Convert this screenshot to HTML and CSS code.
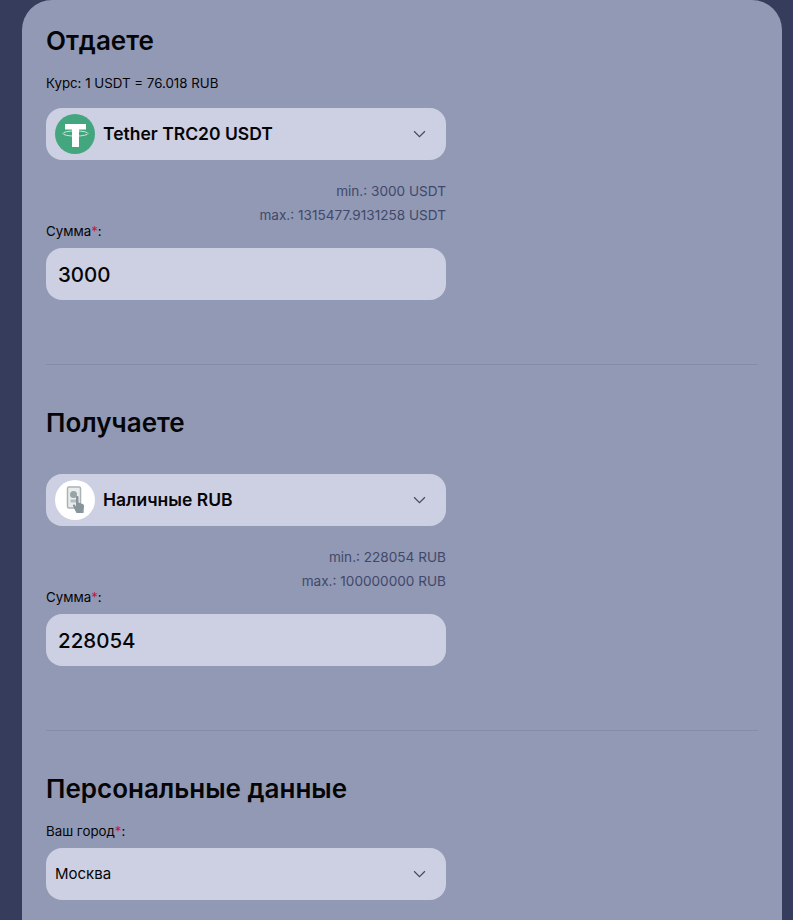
FILE: index.html
```html
<!DOCTYPE html>
<html lang="ru">
<head>
  <meta charset="UTF-8" />
  <meta name="viewport" content="width=device-width, initial-scale=1.0"/>
  <title>Обмен</title>
  <link rel="stylesheet" href="styles.css">
</head>
<body>
  <div class="exchange-card">
    <section class="form-section">
      <h2 class="section-title">Отдаете</h2>
      <p class="rate">Курс: 1 USDT = 76.018 RUB</p>
      <div class="select-box">
        <svg class="coin-icon" viewBox="0 0 40 40">
          <circle cx="20" cy="20" r="20" fill="#43a67f"/>
          <path d="M10 10h21v5.500h-7V33h-7V15.500h-7z" fill="#fff"/>
          <ellipse cx="20.500" cy="19.500" rx="12.500" ry="2.600" fill="none" stroke="#fff" stroke-opacity=".7" stroke-width="1"/>
        </svg>
        <span class="select-text">Tether TRC20 USDT</span>
        <svg class="chevron" viewBox="0 0 12 7"><path d="M1 1l5 5 5-5" fill="none" stroke="#45495f" stroke-width="1.100"/></svg>
      </div>
      <div class="limits">
        <span>min.: 3000 USDT</span>
        <span>max.: 1315477.9131258 USDT</span>
      </div>
      <label class="field-label">Сумма<span class="required">*</span>:</label>
      <div class="amount-box">3000</div>
    </section>

    <section class="form-section">
      <h2 class="section-title title-no-rate">Получаете</h2>
      <div class="select-box">
        <svg class="coin-icon" viewBox="0 0 40 40">
          <circle cx="20" cy="20" r="20" fill="#fff"/>
          <rect x="12.500" y="7" width="13" height="21" rx="1.500" fill="#e9ecec" stroke="#aab3b4" stroke-width="1.500"/>
          <circle cx="18.500" cy="14.500" r="3.500" fill="#98a4a6"/>
          <rect x="15.500" y="19.500" width="6" height="3" fill="#b5bebf"/>
          <path d="M21 17c0-1.500 2.500-1.500 2.500 0v5.500l4 1.500c1 .4 1.500 1 1.500 2l-.5 7h-7l-3.500-7c-.5-1.200 1-2 2-1l1 1.500z" fill="#87949a"/>
        </svg>
        <span class="select-text">Наличные RUB</span>
        <svg class="chevron" viewBox="0 0 12 7"><path d="M1 1l5 5 5-5" fill="none" stroke="#45495f" stroke-width="1.100"/></svg>
      </div>
      <div class="limits">
        <span>min.: 228054 RUB</span>
        <span>max.: 100000000 RUB</span>
      </div>
      <label class="field-label">Сумма<span class="required">*</span>:</label>
      <div class="amount-box">228054</div>
    </section>

    <section class="form-section last">
      <h2 class="section-title title-city">Персональные данные</h2>
      <label class="field-label city-label">Ваш город<span class="required">*</span>:</label>
      <div class="select-box">
        <span class="city-text">Москва</span>
        <svg class="chevron" viewBox="0 0 12 7"><path d="M1 1l5 5 5-5" fill="none" stroke="#45495f" stroke-width="1.100"/></svg>
      </div>
    </section>
  </div>
</body>
</html>
```

FILE: styles.css
```css
html, body {
  margin: 0;
  padding: 0;
  height: 920px;
  overflow: hidden;
}
body {
  background-color: #363c5b;
  font-family: 'Inter', 'Noto Sans', sans-serif;
  color: #050508;
}
.exchange-card {
  width: 712px;
  height: 895px;
  margin-left: 22px;
  padding: 25px 24px 0;
  background-color: #9199b4;
  border-radius: 30px 30px 0 0;
}
.form-section {
  height: 340px;
  margin-bottom: 24px;
  border-bottom: 1px solid #848ca9;
}
.form-section:first-child {
  height: 339px;
}
.form-section + .form-section {
  padding-top: 1px;
}
.form-section.last {
  height: auto;
  border-bottom: none;
  margin-bottom: 0;
}
.section-title {
  margin: 17px 0 0;
  font-size: 26px;
  line-height: 32px;
  font-weight: 600;
}
.form-section:first-child .section-title {
  margin-top: 0;
}
.title-no-rate {
  margin-bottom: 35px;
}
.rate {
  margin: 18px 0 17px;
  font-size: 13.300px;
  line-height: 16px;
}
.select-box {
  display: flex;
  align-items: center;
  box-sizing: border-box;
  width: 400px;
  height: 52px;
  padding: 0 19px 0 9px;
  background-color: #cdd0e2;
  border-radius: 16px;
}
.coin-icon {
  width: 40px;
  height: 40px;
  margin-right: 8px;
  flex-shrink: 0;
}
.select-text {
  margin-bottom: 1px;
  font-size: 17.500px;
  font-weight: 600;
}
.city-text {
  margin-bottom: 1px;
  font-size: 15px;
}
.chevron {
  width: 13px;
  height: 8px;
  margin-left: auto;
  margin-right: 1px;
}
.limits {
  display: flex;
  flex-direction: column;
  width: 400px;
  margin: 19px 0 -4px;
  text-align: right;
  font-size: 13.600px;
  line-height: 24px;
  color: #41486b;
}
.field-label {
  display: block;
  font-size: 13.300px;
  line-height: 16px;
}
.required {
  color: #c01c45;
}
.amount-box {
  box-sizing: border-box;
  width: 400px;
  height: 52px;
  margin-top: 9px;
  padding: 0 12px;
  background-color: #cdd0e2;
  border-radius: 16px;
  font-size: 20.500px;
  line-height: 53px;
  font-weight: 500;
}
.title-city {
  margin-bottom: 18px;
}
.city-label {
  margin-bottom: 9px;
}
```
